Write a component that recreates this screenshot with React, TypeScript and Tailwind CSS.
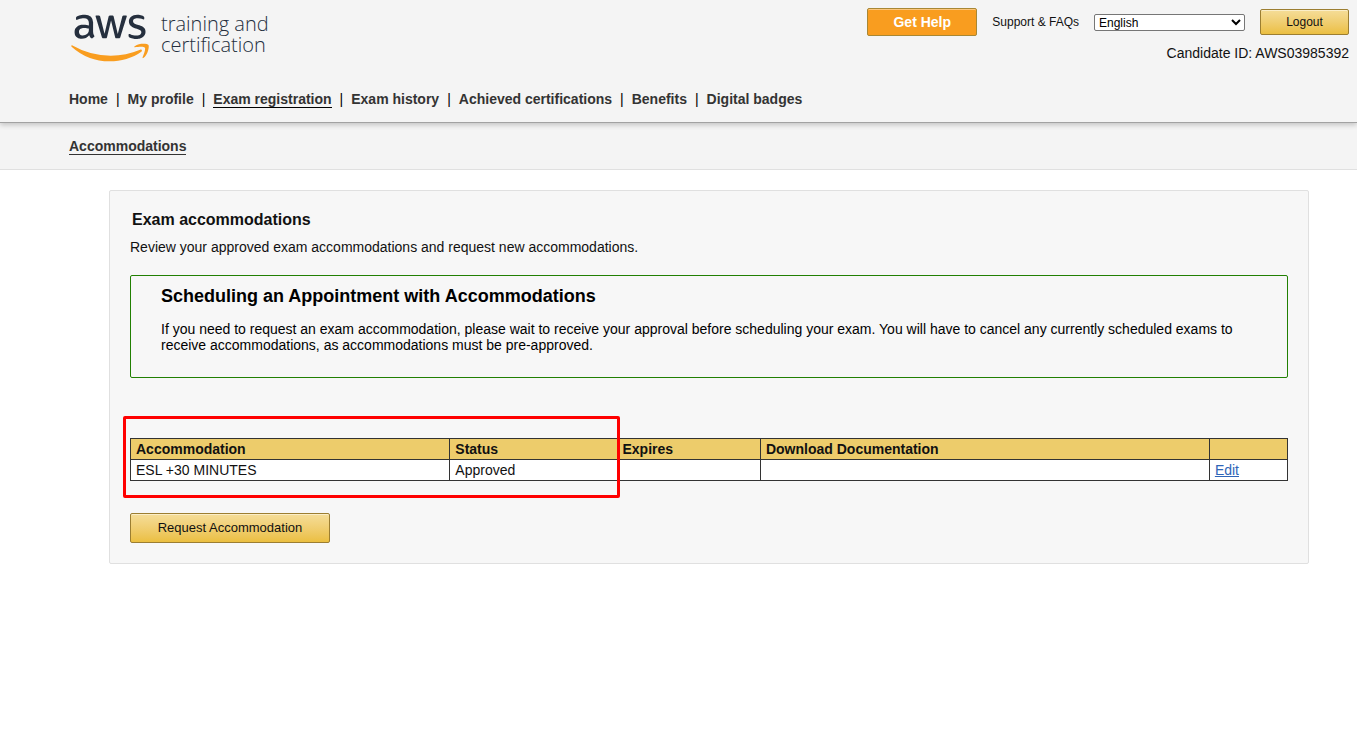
import { FaAws } from "react-icons/fa";

const navItems = [
  "Home",
  "My profile",
  "Exam registration",
  "Exam history",
  "Achieved certifications",
  "Benefits",
  "Digital badges",
];

const columns = [
  { label: "Accommodation", width: "w-[27.6%]" },
  { label: "Status", width: "w-[14.45%]" },
  { label: "Expires", width: "w-[12.4%]" },
  { label: "Download Documentation", width: "w-[38.8%]" },
  { label: "", width: "w-[6.75%]" },
];

const goldButton =
  "cursor-pointer rounded-[2px] border border-[#9c7e31] bg-linear-to-b from-[#f5dd98] to-[#ebbf40] text-[#111111] shadow-[inset_0_1px_0_#fbeec8]";

function Logo() {
  return (
    <a href="#" className="flex pl-0.5 text-[#252f3e]">
      <svg className="absolute" width="0" height="0" aria-hidden="true">
        <defs>
          <linearGradient id="logo-tones" x1="0" y1="0" x2="0" y2="1">
            <stop offset="0.585" stopColor="#252f3e" />
            <stop offset="0.585" stopColor="#f99d1f" />
          </linearGradient>
        </defs>
      </svg>
      <FaAws className="h-[62px] w-[78px]" fill="url(#logo-tones)" aria-label="aws" />
      <span className="ml-3 pt-1.5 font-['Open_Sans',sans-serif] text-xl leading-[21px] font-light">
        <span className="block">training and</span>
        <span className="block">certification</span>
      </span>
    </a>
  );
}

function Header() {
  return (
    <header className="relative border-b border-[#a2a2a2] bg-[#f4f4f4] pt-[7px] pr-2 pb-[14px] pl-[69px] shadow-[0_2px_5px_rgba(0,0,0,0.2)]">
      <div className="flex h-[83px] items-start justify-between">
        <Logo />
        <div className="flex flex-col items-end gap-2 pt-px">
          <div className="flex items-center gap-[15px]">
            <button
              type="button"
              className="h-7 w-[110px] cursor-pointer rounded-[2px] border border-[#a88734] bg-[#f99d1f] text-sm font-bold text-white shadow-[inset_0_1px_0_#fcc67c]"
            >
              Get Help
            </button>
            <a href="#" className="text-xs text-[#111111]">
              Support &amp; FAQs
            </a>
            <select
              aria-label="Language"
              className="h-[17px] w-[151px] rounded-[2px] border border-[#767676] bg-white text-xs text-black"
            >
              <option>English</option>
            </select>
            <button type="button" className={`${goldButton} h-[26px] w-[89px] text-xs`}>
              Logout
            </button>
          </div>
          <p className="text-sm leading-[18px] text-[#111111]">Candidate ID: AWS03985392</p>
        </div>
      </div>
      <nav aria-label="Main">
        <ul className="flex text-sm leading-[18px] text-[#333333]">
          {navItems.map((item, index) => (
            <li key={item} className="flex">
              {index > 0 && <span className="px-2 text-black">|</span>}
              <a
                href="#"
                className={
                  item === "Exam registration"
                    ? "h-[18px] border-b border-black font-bold"
                    : "font-bold"
                }
              >
                {item}
              </a>
            </li>
          ))}
        </ul>
      </nav>
    </header>
  );
}

export default function App() {
  return (
    <div className="min-h-screen bg-white font-['Liberation_Sans',Arial,sans-serif] text-[#111111]">
      <Header />
      <nav
        aria-label="Section"
        className="flex h-[47px] items-center border-b border-[#e0e0e0] bg-[#f4f4f4] pl-[69px]"
      >
        <a
          href="#"
          className="border-b border-[#333333] text-sm leading-4 font-bold text-[#333333]"
        >
          Accommodations
        </a>
      </nav>

      <main className="mt-5 mr-12 ml-[109px] rounded-[2px] border border-[#e0e0e0] bg-[#f7f7f7] p-5">
        <h1 className="px-0.5 text-base leading-[18px] font-bold">Exam accommodations</h1>
        <p className="mt-2.5 text-sm leading-4">
          Review your approved exam accommodations and request new accommodations.
        </p>

        <section className="mt-5 rounded-[2px] border border-[#218003] px-[30px] pt-2.5 pb-6 text-black">
          <h2 className="text-lg leading-5 font-bold">
            Scheduling an Appointment with Accommodations
          </h2>
          <p className="mt-[15px] text-sm leading-4">
            If you need to request an exam accommodation, please wait to receive your approval
            before scheduling your exam. You will have to cancel any currently scheduled exams to
            receive accommodations, as accommodations must be pre-approved.
          </p>
        </section>

        <div className="relative mt-[60px]">
          <table className="w-full table-fixed border-collapse bg-white text-sm leading-4">
            <thead>
              <tr className="h-[21px] bg-[#edcc6b] text-left">
                {columns.map((column) => (
                  <th
                    key={column.width}
                    className={`${column.width} border border-[#333333] px-[5px] py-0.5 font-bold`}
                  >
                    {column.label}
                  </th>
                ))}
              </tr>
            </thead>
            <tbody>
              <tr className="h-[21px]">
                <td className="border border-[#333333] px-[5px] py-0.5">ESL +30 MINUTES</td>
                <td className="border border-[#333333] px-[5px] py-0.5">Approved</td>
                <td className="border border-[#333333] px-[5px] py-0.5" />
                <td className="border border-[#333333] px-[5px] py-0.5" />
                <td className="border border-[#333333] px-[5px] py-0.5">
                  <a href="#" className="text-[#2f65b8] underline">
                    Edit
                  </a>
                </td>
              </tr>
            </tbody>
          </table>
          <div className="pointer-events-none absolute -top-[22px] -left-[7px] h-[82px] w-[42.9%] rounded-[2px] border-3 border-[#ff0000]" />
        </div>

        <button type="button" className={`${goldButton} mt-8 block h-[30px] w-[200px] text-[13px]`}>
          Request Accommodation
        </button>
      </main>
    </div>
  );
}
